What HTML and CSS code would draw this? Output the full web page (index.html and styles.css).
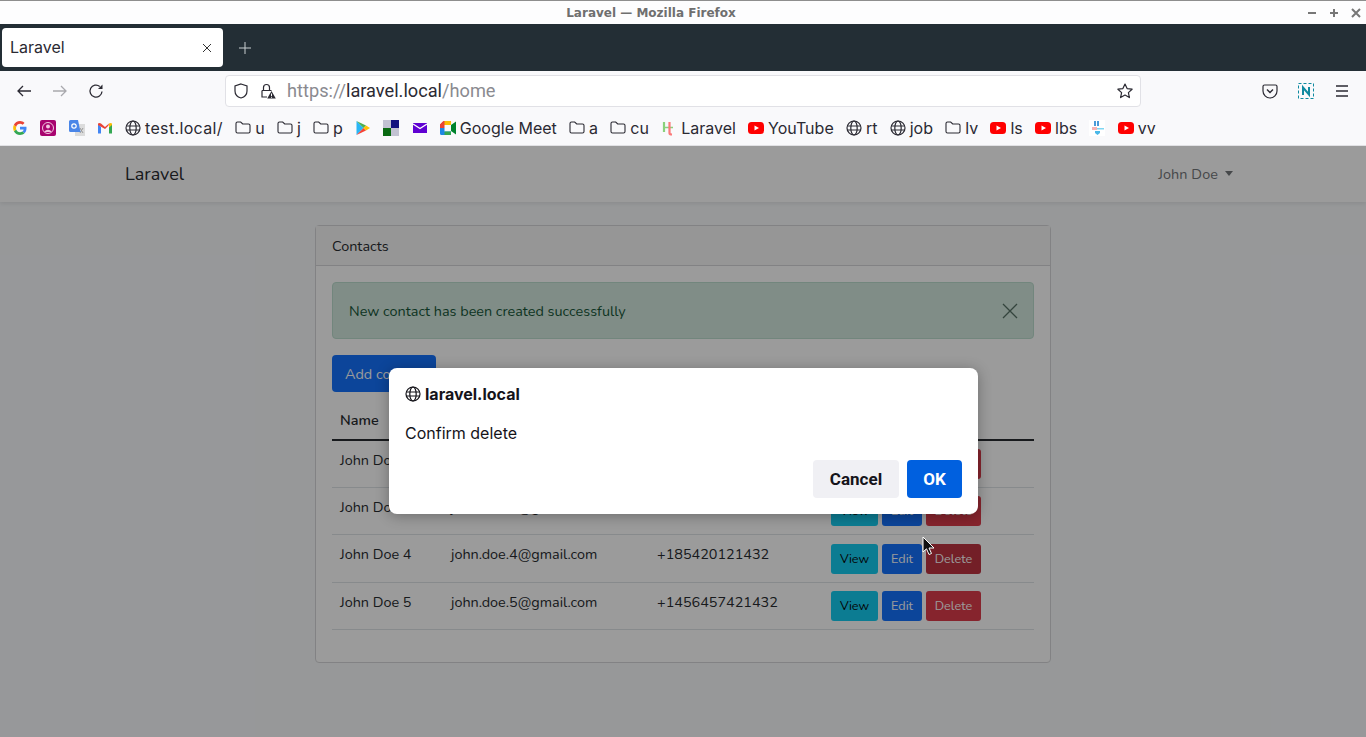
FILE: index.html
```html
<!DOCTYPE html>
<html lang="en">
<head>
    <meta charset="UTF-8">
    <title>Laravel — Mozilla Firefox</title>
    <link rel="stylesheet" href="styles.css">
</head>
<body>
    <svg class="defs" width="0" height="0">
        <symbol id="globe" viewBox="0 0 16 16"><g fill="none" stroke="currentColor" stroke-width="1.2"><circle cx="8" cy="8" r="7"/><ellipse cx="8" cy="8" rx="3.2" ry="7"/><path d="M1 6h14M1 10h14"/></g></symbol>
        <symbol id="folder" viewBox="0 0 16 16"><path d="M1 3.500A1.500 1.500 0 0 1 2.500 2h3.200l2 2h5.800A1.500 1.500 0 0 1 15 5.500v6a1.500 1.500 0 0 1-1.500 1.500h-11A1.500 1.500 0 0 1 1 11.500z" fill="none" stroke="currentColor" stroke-width="1.100"/></symbol>
        <symbol id="youtube" viewBox="0 0 16 16"><rect y="2" width="16" height="12" rx="3.500" fill="#f00"/><path d="M6.500 5.500v5L11 8z" fill="#fff"/></symbol>
    </svg>

    <header class="browser">
        <div class="titlebar">
            <span class="titlebar-text">Laravel — Mozilla Firefox</span>
            <div class="window-buttons">
                <svg width="10" height="10" viewBox="0 0 10 10"><path d="M1 5h8" stroke="#777" stroke-width="2"/></svg>
                <svg width="10" height="10" viewBox="0 0 10 10"><path d="M1 5h8M5 1v8" stroke="#777" stroke-width="2"/></svg>
                <svg width="10" height="10" viewBox="0 0 10 10"><path d="M1 1l8 8M9 1l-8 8" stroke="#777" stroke-width="2"/></svg>
            </div>
        </div>

        <div class="tabbar">
            <div class="tab">
                <span>Laravel</span>
                <svg width="10" height="10" viewBox="0 0 10 10"><path d="M1 1l8 8M9 1l-8 8" stroke="#333" stroke-width="1"/></svg>
            </div>
            <svg class="new-tab" width="14" height="14" viewBox="0 0 14 14"><path d="M7 1v12M1 7h12" stroke="#c9ced1" stroke-width="1"/></svg>
        </div>

        <div class="toolbar">
            <svg class="nav-icon" width="16" height="16" viewBox="0 0 16 16"><path d="M15 8H2M7 3L2 8l5 5" fill="none" stroke="#2b2a33" stroke-width="1.300"/></svg>
            <svg class="nav-icon" width="16" height="16" viewBox="0 0 16 16"><path d="M1 8h13M9 3l5 5-5 5" fill="none" stroke="#a9a9ad" stroke-width="1.300"/></svg>
            <svg class="nav-icon" width="16" height="16" viewBox="0 0 16 16"><path d="M14 8.500A6 6 0 1 1 11.800 3.400" fill="none" stroke="#2b2a33" stroke-width="1.300"/><path d="M14.500 1.500v4.500H10z" fill="#2b2a33"/></svg>
            <div class="urlbar">
                <svg width="16" height="16" viewBox="0 0 16 16"><path d="M8 1l6 2v5c0 3.500-2.500 6-6 7-3.500-1-6-3.500-6-7V3z" fill="none" stroke="#2b2a33" stroke-width="1.200"/></svg>
                <svg class="lock" width="16" height="16" viewBox="0 0 16 16"><path d="M3.500 7.500V4.500a3 3 0 0 1 6 0v3M2 7.500h9.500M2 7.500v6.500h5" fill="none" stroke="#2b2a33" stroke-width="1.200"/><path d="M11.500 8l4.300 7.500H7.200z" fill="#2b2a33"/><path d="M11.500 10.500v2.500M11.500 13.800v.9" stroke="#fff" stroke-width="1"/></svg>
                <span class="url"><span class="url-dim">https://</span>laravel.local<span class="url-dim">/home</span></span>
                <svg class="star" width="16" height="16" viewBox="0 0 16 16"><path d="M8 1l2.100 4.600 5 .6-3.700 3.400 1 5L8 12.100l-4.400 2.500 1-5L.9 6.200l5-.6z" fill="none" stroke="#2b2a33" stroke-width="1.200" stroke-linejoin="round"/></svg>
            </div>
            <div class="toolbar-right">
                <svg width="16" height="16" viewBox="0 0 16 16"><path d="M1 3.500A1.500 1.500 0 0 1 2.500 2h11A1.500 1.500 0 0 1 15 3.500V8a7 7 0 0 1-14 0z" fill="none" stroke="#2b2a33" stroke-width="1.200"/><path d="M5 6.500l3 3 3-3" fill="none" stroke="#2b2a33" stroke-width="1.400"/></svg>
                <svg width="16" height="16" viewBox="0 0 16 16"><rect x=".5" y=".5" width="15" height="15" fill="none" stroke="#0f8aa0" stroke-dasharray="3 2"/><path d="M5 12V4.500l6 7V4" fill="none" stroke="#0f8aa0" stroke-width="2"/></svg>
                <svg width="16" height="16" viewBox="0 0 16 16"><path d="M2 3h12M2 8h12M2 13h12" stroke="#2b2a33" stroke-width="1.300"/></svg>
            </div>
        </div>

        <nav class="bookmarks">
            <span class="bm"><svg class="bm-icon" viewBox="0 0 16 16"><path d="M14.500 8.200c0-.5 0-1-.1-1.400H8v2.700h3.700c-.2.900-.7 1.600-1.400 2.100l2.200 1.700c1.300-1.200 2-3 2-5.100z" fill="#4285f4"/><path d="M8 15c1.900 0 3.400-.6 4.500-1.700l-2.200-1.700c-.6.400-1.400.7-2.300.7-1.800 0-3.300-1.200-3.800-2.800L1.900 11.200C3 13.500 5.300 15 8 15z" fill="#34a853"/><path d="M4.200 9.500c-.3-.9-.3-1.900 0-2.800L1.900 4.800c-1 1.900-1 4.500 0 6.400z" fill="#fbbc05"/><path d="M8 3.800c1 0 1.900.3 2.600 1l1.900-1.900C11.400 1.700 9.800 1 8 1 5.300 1 3 2.500 1.900 4.800l2.300 1.900C4.700 5 6.200 3.800 8 3.800z" fill="#ea4335"/></svg></span>
            <span class="bm"><svg class="bm-icon" viewBox="0 0 16 16"><rect width="16" height="16" rx="2" fill="#a8046f"/><circle cx="8" cy="8" r="5.500" fill="none" stroke="#f2c6e0"/><circle cx="8" cy="6.500" r="2" fill="#f2c6e0"/><path d="M4.500 12c1-3 6-3 7 0z" fill="#f2c6e0"/></svg></span>
            <span class="bm"><svg class="bm-icon" viewBox="0 0 16 16"><rect x="6" y="4" width="10" height="12" fill="#dcdcdc"/><path d="M11 8l3 5M14 8l-3 5" stroke="#999" stroke-width="1"/><path d="M1.500 0h7.500l2.500 12H1.500A1.500 1.500 0 0 1 0 10.500v-9A1.500 1.500 0 0 1 1.500 0z" fill="#4a86e8"/><circle cx="5" cy="6" r="2.200" fill="none" stroke="#fff" stroke-width="1.200"/></svg></span>
            <span class="bm"><svg class="bm-icon" viewBox="0 0 16 16"><path d="M1 4v9.500h3V7z" fill="#4285f4"/><path d="M15 4v9.500h-3V7z" fill="#34a853"/><path d="M1 5V3.500q1.500-1 3 0L8 7l4-3.500-.5 2L8 9z" fill="#ea4335"/><path d="M12 3.500q1.500-1 3 0V5l-3 2.500z" fill="#fbbc05"/></svg></span>
            <span class="bm"><svg class="bm-icon"><use href="#globe"/></svg><span class="bm-wide">test.local/</span></span>
            <span class="bm"><svg class="bm-icon"><use href="#folder"/></svg>u</span>
            <span class="bm"><svg class="bm-icon"><use href="#folder"/></svg>j</span>
            <span class="bm"><svg class="bm-icon"><use href="#folder"/></svg>p</span>
            <span class="bm"><svg class="bm-icon" viewBox="0 0 16 16"><path d="M1.500 1v14L8.500 8z" fill="#29b6f6"/><path d="M1.500 1l7 7 2.500-2.500z" fill="#4caf50"/><path d="M1.500 15l7-7 2.500 2.500z" fill="#f44336"/><path d="M11 5.500L15 8l-4 2.500L8.500 8z" fill="#ffc107"/></svg></span>
            <span class="bm"><svg class="bm-icon" viewBox="0 0 16 16"><rect width="16" height="16" fill="#c2c2d2"/><rect x="8" width="8" height="8" fill="#12127e"/><rect y="8" width="8" height="8" fill="#0a6a12"/></svg></span>
            <span class="bm"><svg class="bm-icon" viewBox="0 0 16 16"><rect x="1" y="3" width="14" height="10" fill="#6001d2"/><path d="M1 4l7 4.500L15 4" fill="none" stroke="#fff" stroke-width="1.400"/></svg></span>
            <span class="bm"><svg class="bm-icon" viewBox="0 0 16 16"><path d="M3.500 1H11v4H4.500v3H0V4.500z" fill="#ea4335"/><path d="M4.500 1H10.500A1.500 1.500 0 0 1 11 3v2H4.500z" fill="#fbbc05"/><path d="M0 8h4.500v3.500H11V15H1.500A1.500 1.500 0 0 1 0 13.500z" fill="#1e88e5"/><path d="M4.500 11.500H11V15H4.500z" fill="#34a853"/><path d="M0 4.500L3.500 1v7H0z" fill="#ea4335"/><path d="M11 5l5-3.500v13L11 11z" fill="#00832d"/></svg>Google Meet</span>
            <span class="bm"><svg class="bm-icon"><use href="#folder"/></svg>a</span>
            <span class="bm"><svg class="bm-icon"><use href="#folder"/></svg>cu</span>
            <span class="bm"><svg class="bm-icon" viewBox="0 0 16 16"><path d="M3 2v10" stroke="#8bd17c" stroke-width="2.200"/><path d="M3 7.500h9" stroke="#8bd17c" stroke-width="1.500"/><path d="M8.500 2v11q0 1.500 2.500 1.500" fill="none" stroke="#fb7a7a" stroke-width="2.200"/></svg>Laravel</span>
            <span class="bm"><svg class="bm-icon"><use href="#youtube"/></svg>YouTube</span>
            <span class="bm"><svg class="bm-icon"><use href="#globe"/></svg>rt</span>
            <span class="bm"><svg class="bm-icon"><use href="#globe"/></svg>job</span>
            <span class="bm"><svg class="bm-icon"><use href="#folder"/></svg>lv</span>
            <span class="bm"><svg class="bm-icon"><use href="#youtube"/></svg>ls</span>
            <span class="bm"><svg class="bm-icon"><use href="#youtube"/></svg>lbs</span>
            <span class="bm"><svg class="bm-icon" viewBox="0 0 16 16"><rect width="16" height="16" fill="#fff"/><path d="M5 1h2v5H5zM8 1h2v5H8z" fill="#4a9bd8"/><path d="M3 7h5v3H3z" fill="#f6b3b3"/><path d="M8 8h7v1.500H8z" fill="#7fd6f2"/><path d="M6 11h5v2l-2.500 2L6 13z" fill="#4ab8e8"/></svg></span>
            <span class="bm"><svg class="bm-icon"><use href="#youtube"/></svg>vv</span>
        </nav>
    </header>

    <main class="page">
        <div class="app-nav">
            <span class="brand">Laravel</span>
            <span class="user">John Doe<i class="caret"></i></span>
        </div>

        <section class="card">
            <div class="card-header">Contacts</div>
            <div class="card-body">
                <div class="alert">
                    <span>New contact has been created successfully</span>
                    <svg width="16" height="16" viewBox="0 0 16 16"><path d="M1 1l14 14M15 1L1 15" stroke="#1a3a2c" stroke-width="1.300" opacity=".7"/></svg>
                </div>
                <a class="btn btn-add">Add contact</a>
                <table class="contacts">
                    <thead>
                        <tr><th class="col-name">Name</th><th class="col-email">Email</th><th class="col-phone">Phone</th><th>Action</th></tr>
                    </thead>
                    <tbody>
                        <tr><td>John Doe 2</td><td>john.doe.2@gmail.com</td><td>+185420121430</td><td><a class="btn btn-view">View</a><a class="btn btn-edit">Edit</a><a class="btn btn-delete">Delete</a></td></tr>
                        <tr><td>John Doe 3</td><td>john.doe.3@gmail.com</td><td>+185420121431</td><td><a class="btn btn-view">View</a><a class="btn btn-edit">Edit</a><a class="btn btn-delete">Delete</a></td></tr>
                        <tr><td>John Doe 4</td><td>john.doe.4@gmail.com</td><td>+185420121432</td><td><a class="btn btn-view">View</a><a class="btn btn-edit">Edit</a><a class="btn btn-delete btn-delete-hover">Delete</a></td></tr>
                        <tr><td>John Doe 5</td><td>john.doe.5@gmail.com</td><td>+1456457421432</td><td><a class="btn btn-view">View</a><a class="btn btn-edit">Edit</a><a class="btn btn-delete">Delete</a></td></tr>
                    </tbody>
                </table>
            </div>
        </section>

        <div class="overlay"></div>

        <div class="dialog">
            <div class="dialog-title"><svg width="16" height="16"><use href="#globe"/></svg>laravel.local</div>
            <p class="dialog-text">Confirm delete</p>
            <div class="dialog-actions">
                <button class="dlg-btn dlg-cancel">Cancel</button>
                <button class="dlg-btn dlg-ok">OK</button>
            </div>
        </div>

        <svg class="cursor" width="14" height="20" viewBox="0 0 14 20"><path d="M1 1v15l3.500-3.200L7 18.500l2.500-1-2.500-5.500h5z" fill="#111" stroke="#fff" stroke-width="1"/></svg>
    </main>
</body>
</html>
```

FILE: styles.css
```css
* {
    margin: 0;
    padding: 0;
    box-sizing: border-box;
}

body {
    width: 1366px;
    height: 737px;
    overflow: hidden;
    font-family: "Inter", sans-serif;
    background: #f9f9fb;
}

.defs {
    display: block;
}

/* Browser chrome */
.titlebar {
    height: 24px;
    border-top: 1px solid #8e8e8e;
    background: #fdfdfe;
    position: relative;
    display: flex;
    align-items: center;
    justify-content: center;
    padding: 1px 64px 0 0;
}

.titlebar-text {
    font-family: "DejaVu Sans", sans-serif;
    font-size: 12px;
    font-weight: 700;
    color: #6f6f6f;
}

.window-buttons {
    position: absolute;
    right: 5px;
    top: 7px;
    display: flex;
    gap: 12px;
}

.tabbar {
    height: 47px;
    background: #232e35;
    display: flex;
    align-items: center;
    padding-left: 2px;
}

.tab {
    width: 221px;
    height: 39px;
    background: #fff;
    border-radius: 4px;
    display: flex;
    align-items: center;
    justify-content: space-between;
    padding: 0 11px 2px 8px;
    font-size: 16px;
    color: #2b2a33;
}

.tab svg {
    margin-top: 2px;
}

.new-tab {
    margin-left: 15px;
}

.toolbar {
    height: 41px;
    background: #f9f9fb;
    display: flex;
    align-items: center;
    padding: 0 0 1px 16px;
}

.nav-icon {
    margin-right: 20px;
}

.urlbar {
    width: 916px;
    height: 32px;
    margin-left: 101px;
    background: #fff;
    border: 1px solid #e1e1e6;
    border-radius: 4px;
    display: flex;
    align-items: center;
    padding: 0 7px;
}

.lock {
    margin-left: 11px;
}

.url {
    font-family: "Roboto", sans-serif;
    font-size: 18.200px;
    margin-left: 11px;
    padding-bottom: 2px;
    color: #2b2a33;
    flex: 1;
}

.url-dim {
    color: #8a8a90;
}

.toolbar-right {
    display: flex;
    gap: 20px;
    margin-left: 121px;
}

.bookmarks {
    height: 34px;
    background: #f9f9fb;
    border-bottom: 1px solid #e3e3e6;
    display: flex;
    align-items: center;
    gap: 12.250px;
    padding: 0 0 2px 12px;
    font-size: 16px;
    color: #2b2a33;
}

.bm {
    display: flex;
    align-items: center;
    gap: 4px;
}

.bm-wide {
    letter-spacing: .35px;
}

.bm-icon {
    width: 16px;
    height: 16px;
    flex: none;
}

/* App page */
.page {
    position: relative;
    height: 591px;
    background: #f8fafc;
    font-family: "Nunito", "Lato", sans-serif;
    font-size: 14.400px;
    color: #212529;
}

.app-nav {
    height: 56px;
    background: #fff;
    box-shadow: 0 2px 4px rgba(0, 0, 0, .08);
    display: flex;
    align-items: center;
    justify-content: space-between;
    padding: 0 133px 0 125px;
}

.brand {
    font-size: 18px;
}

.user {
    color: #6f7276;
    display: flex;
    align-items: center;
    letter-spacing: .1px;
}

.caret {
    margin-left: 7px;
    border-top: 5px solid #6f7276;
    border-left: 4px solid transparent;
    border-right: 4px solid transparent;
    margin-top: -2px;
}

.card {
    width: 736px;
    height: 438px;
    margin: 23px 0 0 315px;
    background: #fff;
    border: 1px solid #d5d5d8;
    border-radius: 4px;
}

.card-header {
    height: 40px;
    padding: 0 16px;
    display: flex;
    align-items: center;
    background: #f7f7f7;
    border-bottom: 1px solid #d5d5d8;
}

.card-body {
    padding: 16px;
}

.alert {
    height: 57px;
    background: #d1e7dd;
    border: 1px solid #badbcc;
    border-radius: 4px;
    color: #0f5132;
    display: flex;
    align-items: center;
    justify-content: space-between;
    padding: 0 15px 0 16px;
    margin-bottom: 16px;
}

.btn {
    display: inline-flex;
    align-items: center;
    justify-content: center;
    border-radius: 3px;
    font-size: 12.600px;
    height: 30px;
    margin-right: 4px;
}

.btn-add {
    width: 104px;
    height: 37px;
    background: #0d6efd;
    color: #fff;
    font-size: 14.400px;
    border-radius: 4px;
    margin: 0 0 9px;
}

.contacts {
    width: 702px;
    table-layout: fixed;
    border-collapse: collapse;
}

.col-name {
    width: 111px;
}

.col-email {
    width: 206px;
}

.col-phone {
    width: 174px;
}

.contacts th {
    text-align: left;
    font-weight: 600;
    padding: 8px;
    height: 39px;
    border-bottom: 2px solid #212529;
}

.contacts td {
    padding: 8px;
    height: 47.400px;
    line-height: 1.600;
    vertical-align: top;
    border-bottom: 1px solid #dee2e6;
}

.contacts td:last-child {
    vertical-align: middle;
    white-space: nowrap;
}

.btn-view {
    width: 47px;
    background: #0dcaf0;
    color: #000;
}

.btn-edit {
    width: 40px;
    background: #0d6efd;
    color: #fff;
}

.btn-delete {
    width: 55px;
    background: #dc3545;
    color: #fff;
}

.btn-delete-hover {
    background: #bb2d3b;
}

.overlay {
    position: absolute;
    inset: 0;
    background: rgba(12, 12, 13, .41);
}

.dialog {
    position: absolute;
    left: 389px;
    top: 222px;
    width: 589px;
    height: 146px;
    background: #fff;
    border-radius: 8px;
    box-shadow: 0 2px 14px rgba(0, 0, 0, .3);
    padding: 16px;
    font-family: "Inter", sans-serif;
    color: #15141a;
}

.dialog-title {
    display: flex;
    align-items: center;
    gap: 4px;
    font-size: 16px;
    font-weight: 700;
    height: 20px;
}

.dialog-text {
    font-size: 16px;
    margin-top: 19px;
}

.dialog-actions {
    display: flex;
    justify-content: flex-end;
    gap: 8px;
    margin-top: 17px;
}

.dlg-btn {
    height: 38px;
    border: none;
    border-radius: 4px;
    font-family: "Roboto", sans-serif;
    font-size: 17px;
    font-weight: 700;
}

.dlg-cancel {
    width: 86px;
    background: #f0f0f4;
    color: #15141a;
}

.dlg-ok {
    width: 55px;
    background: #0060df;
    color: #fff;
}

.cursor {
    position: absolute;
    left: 922px;
    top: 390px;
}
```
